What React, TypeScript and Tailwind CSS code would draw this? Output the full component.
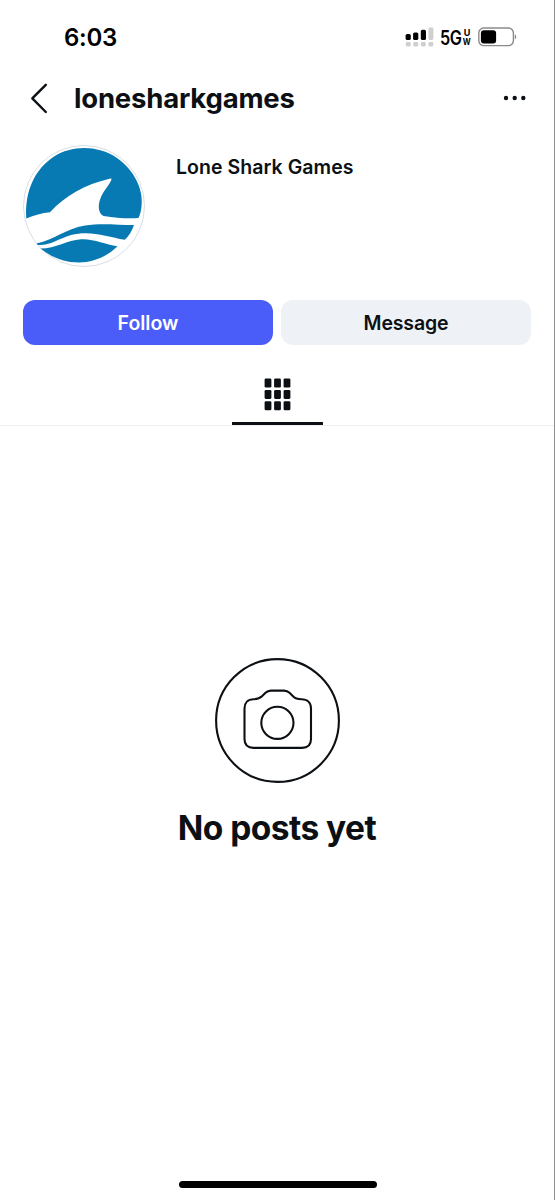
import React from 'react';

const SignalIcon = () => (
  <svg width="30" height="23" viewBox="0 0 30 23">
    <g fill="#000">
      <rect x="0.6" y="10" width="5.2" height="6" rx="1.6" />
      <rect x="8.1" y="8.4" width="5.2" height="7.6" rx="1.6" />
      <rect x="15.8" y="5.8" width="5.2" height="10.2" rx="1.6" />
    </g>
    <g fill="#cfcfcf">
      <rect x="23.4" y="3.6" width="5" height="12.4" rx="1.4" />
      <rect x="0.8" y="18" width="5" height="4.4" rx="1.4" />
      <rect x="8.3" y="18" width="5" height="4.4" rx="1.4" />
      <rect x="15.8" y="18" width="5" height="4.4" rx="1.4" />
      <rect x="23.4" y="18" width="5" height="4.4" rx="1.4" />
    </g>
  </svg>
);

const BatteryIcon = () => (
  <svg width="39" height="20" viewBox="0 0 39 20" fill="none">
    <rect x="0.8" y="1" width="34.6" height="17.6" rx="5" stroke="#8a8a8a" strokeWidth="1.4" />
    <rect x="2.9" y="3.2" width="15.2" height="13.2" rx="3" fill="#000" />
    <path d="M36.8 7.2c1.9.8 1.9 4.4 0 5.2z" fill="#8a8a8a" />
  </svg>
);

const StatusBar = () => (
  <div className="flex h-[74px] justify-between pl-[64px] pr-[37px]">
    <span className="mt-[20px] text-[24px] font-semibold leading-[36px] tracking-[-0.3px] text-black">6:03</span>
    <div className="flex items-start">
      <div className="mt-[24px]">
        <SignalIcon />
      </div>
      <span className="ml-[5px] mt-[26px] w-[22px] origin-left scale-x-[0.83] text-[19.5px] font-semibold leading-[24px] tracking-[-0.4px] text-black">5G</span>
      <span className="mt-[28px] flex w-[10px] flex-col items-center text-[9px] font-bold leading-[9px] text-black">
        <span>U</span>
        <span className="scale-x-[0.85]">W</span>
      </span>
      <div className="ml-[6px] mt-[27px]">
        <BatteryIcon />
      </div>
    </div>
  </div>
);

const SharkLogo = () => (
  <svg width="122" height="122" viewBox="0 0 122 122" fill="#087ab3">
    <circle cx="61" cy="61" r="60.5" fill="#fff" stroke="#d9dfe6" strokeWidth="1" />
    <path d="M3.3 73.5C1.5 46 12 24 31 11.5C49 0 75 0 94 13C112 25.5 120 45 118.7 59C118.3 64 117.6 69 115.5 73C104 74 94 72.8 80.5 71C75 68 74.5 60 78 52C81 45 86 40.5 88.3 35C88.8 33.7 88 33.3 86.5 33.8C62 39.5 42 51 27 67.3C19 68 11 70.5 3.3 73.5Z" />
    <path d="M13.5 98.5C32 94.5 42 84 62 80.5C78 78 94 80 111 80C109 86 106 91 101.8 94.8C84 91.5 67 85 48 90C35 94 26 101 14.8 100Z" />
    <path d="M17.5 103.5C33 103.5 44 95 58 94.2C71 93.5 82 99.5 94.5 101.2C84 111.5 70 117.5 56 117.5C41 117.5 28 112 17.5 103.5Z" />
  </svg>
);

const GridIcon = () => (
  <svg width="27" height="33" viewBox="0 0 27 33" fill="#0c1014">
    {[0.5, 11.9, 23.3].map((y) =>
      [0.6, 10.1, 19.6].map((x) => (
        <rect key={`${x}-${y}`} x={x} y={y} width="6.8" height="9" rx="1.3" />
      ))
    )}
  </svg>
);

const CameraIcon = () => (
  <svg width="126" height="126" viewBox="0 0 126 126" fill="none" stroke="#0c1014" strokeWidth="2.1">
    <circle cx="62.5" cy="62.5" r="61.4" />
    <path d="M38.5 41.2C42 41.2 44.5 40.9 47 38.3L50.5 34.8C52.2 33.1 53.8 32.6 56 32.6H69C71.2 32.6 72.8 33.1 74.5 34.8L78 38.3C80.5 40.9 83 41.2 86.5 41.2C92.5 41.2 96 44.8 96 50.5V81C96 86.8 92.5 89.9 87 89.9H38.5C33 89.9 29.5 86.8 29.5 81V50.5C29.5 44.8 33 41.2 38.5 41.2Z" />
    <circle cx="62.4" cy="64.8" r="16.1" />
  </svg>
);

export default function App() {
  return (
    <div className="flex h-[1200px] w-[555px] flex-col overflow-hidden border-r border-[#909090] bg-white font-['Inter',sans-serif] text-[#0c1014]">
      <StatusBar />

      <header className="flex h-[48px] items-center pl-[30px] pr-[27px]">
        <svg width="20" height="32" viewBox="0 0 20 32" fill="none" stroke="#0c1014" strokeWidth="2.4" strokeLinecap="round" strokeLinejoin="round">
          <path d="M15.8 2.8L2.3 16.4L15.8 30" />
        </svg>
        <h1 className="ml-[24px] text-[27.5px] font-bold leading-[40px] tracking-[-0.2px]">lonesharkgames</h1>
        <svg className="ml-auto" width="24" height="6" viewBox="0 0 24 6" fill="#0c1014">
          <circle cx="3" cy="3" r="2.2" />
          <circle cx="11.7" cy="3" r="2.2" />
          <circle cx="20.3" cy="3" r="2.2" />
        </svg>
      </header>

      <section className="mt-[23px] flex h-[155px] items-start px-[23px]">
        <SharkLogo />
        <p className="ml-[31px] mt-[8px] text-[19.5px] font-semibold leading-[28px] tracking-[0.05px]">Lone Shark Games</p>
      </section>

      <div className="flex h-[45px] gap-[8px] px-[23px]">
        <button className="flex-1 rounded-[12px] bg-[#4a5df9] pt-[2px] text-[19.5px] font-semibold text-white">Follow</button>
        <button className="flex-1 rounded-[12px] bg-[#eef1f5] pt-[2px] text-[19.5px] font-semibold tracking-[-0.15px]">Message</button>
      </div>

      <nav className="flex h-[81px] justify-center border-b border-[#eeeff1]">
        <div className="flex h-[80px] w-[91px] flex-col items-center justify-between border-b-[3px] border-[#0c1014] pt-[33px]">
          <GridIcon />
        </div>
      </nav>

      <main className="flex flex-1 flex-col items-center pt-[231px]">
        <div className="ml-[2px] mt-[1px]">
          <CameraIcon />
        </div>
        <h2 className="mt-[21px] text-[33.5px] font-bold leading-[46px] tracking-[-0.55px]">No posts yet</h2>
      </main>

      <div className="mb-[12px] ml-[179px] h-[7px] w-[198px] rounded-full bg-black" />
    </div>
  );
}
